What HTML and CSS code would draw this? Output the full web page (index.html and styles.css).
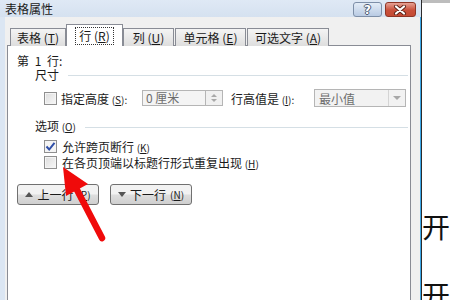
FILE: index.html
```html
<!DOCTYPE html>
<html lang="zh-CN">
<head>
  <meta charset="UTF-8" />
  <title>表格属性</title>
  <link rel="stylesheet" href="styles.css">
</head>
<body>

<div class="screen">
  <div class="dialog">
    <div class="titlebar">
      <span class="title">表格属性</span>
      <div class="caption-btns">
        <span class="cap-btn help">?</span>
        <span class="cap-btn close">
          <svg width="14" height="10" viewBox="0 0 14 10">
            <path d="M3 1.5 L11 8.5 M11 1.5 L3 8.5" stroke="#5a2218" stroke-width="4" stroke-linecap="round"/>
            <path d="M3 1.5 L11 8.5 M11 1.5 L3 8.5" stroke="#fff" stroke-width="2.2" stroke-linecap="round"/>
          </svg>
        </span>
      </div>
    </div>

    <div class="client">
      <div class="tabs">
        <span class="tab t1">表格 (<u>T</u>)</span>
        <span class="tab t2 active"><span class="focus">行 (<u>R</u>)</span></span>
        <span class="tab t3">列 (<u>U</u>)</span>
        <span class="tab t4">单元格 (<u>E</u>)</span>
        <span class="tab t5">可选文字 (<u>A</u>)</span>
      </div>

      <div class="panel">
        <div class="row-title">第 1 行:</div>

        <div class="group-head"><span>尺寸</span><i class="rule"></i></div>
        <div class="size-row">
          <span class="check"></span>
          <span class="label l1">指定高度 <small>(<u>S</u>):</small></span>
          <span class="field">0 厘米</span>
          <span class="spin"><b class="up"></b><b class="down"></b></span>
          <span class="label l2">行高值是 <small>(<u>I</u>):</small></span>
          <span class="select">最小值<span class="drop"><b></b></span></span>
        </div>

        <div class="group-head opts"><span>选项 <small>(<u>O</u>)</small></span><i class="rule"></i></div>
        <div class="opt-row">
          <span class="check on">
            <svg width="11" height="11" viewBox="0 0 11 11"><path d="M1.5 5.5 L4.2 8.5 L9.5 1.8" fill="none" stroke="#2f4fa8" stroke-width="2"/></svg>
          </span>
          <span>允许跨页断行 <small>(<u>K</u>)</small></span>
        </div>
        <div class="opt-row">
          <span class="check"></span>
          <span>在各页顶端以标题行形式重复出现 <small>(<u>H</u>)</small></span>
        </div>

        <div class="nav-btns">
          <span class="btn"><i class="tri up"></i>上一行 <small>(<u>P</u>)</small></span>
          <span class="btn"><i class="tri down"></i>下一行 <small>(<u>N</u>)</small></span>
        </div>
      </div>
    </div>
  </div>

  <div class="doc">
    <p>开</p>
    <p>开</p>
  </div>

  <!-- 红色箭头标注 -->
  <svg class="arrow" width="450" height="300" viewBox="0 0 450 300">
    <line x1="76" y1="188" x2="102" y2="238" stroke="#f00a0a" stroke-width="6.5" stroke-linecap="round"/>
    <polygon points="63,167 88,184 66,196" fill="#f00a0a"/>
  </svg>
</div>

</body>
</html>
```

FILE: styles.css
```css
body {
  margin: 0;
  font-family: "Noto Sans CJK SC", "Liberation Sans", sans-serif;
  font-size: 12px;
  color: #1a1a1a;
  background: #fff;
}
small {
  font-size: 10px;
}
.screen {
  position: relative;
  display: flex;
  width: 450px;
  height: 300px;
  overflow: hidden;
}
.dialog {
  width: 428px;
  box-sizing: border-box;
  display: flex;
  flex-direction: column;
  background: #dbe6f3;
  border-right: 1px solid #2b2b2b;
}
.titlebar {
  height: 20px;
  display: flex;
  align-items: center;
  justify-content: space-between;
  padding: 0 5px 0 5px;
  background: linear-gradient(#dfe9f5, #d5e1f0);
}
.title {
  line-height: 14px;
  margin-top: 1px;
}
.caption-btns {
  display: flex;
  gap: 3px;
  align-self: flex-start;
  margin-top: 2px;
}
.cap-btn {
  height: 15px;
  box-sizing: border-box;
  border-radius: 3px;
  display: flex;
  align-items: center;
  justify-content: center;
}
.help {
  width: 29px;
  border: 1px solid #7d8fa8;
  background: linear-gradient(#e3ecf7, #b9cbe3);
  color: #fff;
  font-family: "DejaVu Sans", sans-serif;
  font-weight: bold;
  font-size: 12px;
  line-height: 12px;
  text-shadow: 1px 0 #4a5a72, -1px 0 #4a5a72, 0 1px #4a5a72, 0 -1px #4a5a72;
}
.close {
  width: 31px;
  border: 1px solid #8e3526;
  background: linear-gradient(#e6a295, #c9503b 55%, #c44a33);
}
.client {
  flex: 1;
  margin-left: 5px;
  background: #f0f0f0;
  border-right: 1px solid #3ba6e6;
  padding: 7px 9px 0 2px;
}
.tabs {
  display: flex;
  align-items: flex-end;
  gap: 1px;
  padding-left: 3px;
  height: 22px;
  margin-bottom: -1px;
  position: relative;
}
.tab {
  height: 18px;
  box-sizing: border-box;
  border: 1px solid #898c95;
  border-bottom: none;
  background: linear-gradient(#f4f4f4, #dedede);
  display: flex;
  align-items: center;
  justify-content: center;
  line-height: 14px;
}
.tab u, small u {
  text-decoration: underline;
}
.t1 { width: 56px; }
.t2 { width: 57px; }
.t3 { width: 51px; }
.t4 { width: 71px; }
.t5 { width: 82px; }
.tab.active {
  height: 22px;
  background: #fff;
  margin: 0 -1px;
}
.focus {
  outline: 1px dotted #333;
  padding: 1px 3px;
}
.panel {
  background: #fff;
  border: 1px solid #898c95;
  border-bottom: none;
  height: 260px;
  padding: 8px 0 0 9px;
}
.row-title {
  line-height: 14px;
  word-spacing: 3px;
}
.group-head {
  display: flex;
  align-items: center;
  padding-left: 18px;
  line-height: 14px;
  margin-right: 2px;
}
.group-head .rule {
  flex: 1;
  height: 1px;
  background: #d5dfe5;
  margin: 1px 0 0 9px;
}
.opts {
  margin-top: 12px;
}
.check {
  width: 13px;
  height: 13px;
  box-sizing: border-box;
  border: 1px solid #8f8f8f;
  background: linear-gradient(135deg, #dcdcdc, #f8f8f8);
  box-shadow: inset 0 0 0 1px #f4f4f4;
  display: flex;
  align-items: center;
  justify-content: center;
  flex: none;
}
.check.on {
  background: #f4f4f4;
}
.size-row {
  display: flex;
  align-items: center;
  height: 18px;
  margin-top: 7px;
  padding-left: 27px;
}
.label {
  margin-left: 4px;
}
.l1 { width: 81px; }
.l2 { width: 83px; margin-left: 8px; }
.field {
  width: 64px;
  height: 16px;
  box-sizing: border-box;
  border: 1px solid #b5b5b5;
  background: #f4f4f4;
  color: #6d6d6d;
  padding-left: 3px;
  line-height: 14px;
}
.spin {
  width: 17px;
  height: 16px;
  box-sizing: border-box;
  border: 1px solid #b5b5b5;
  border-left: none;
  background: #f0f0f0;
  display: flex;
  flex-direction: column;
  align-items: center;
  justify-content: space-around;
  padding: 2px 0;
}
.spin b {
  width: 0;
  height: 0;
  border-left: 3px solid transparent;
  border-right: 3px solid transparent;
}
.spin .up { border-bottom: 3px solid #a8a8a8; }
.spin .down { border-top: 3px solid #a8a8a8; }
.select {
  width: 92px;
  height: 18px;
  box-sizing: border-box;
  border: 1px solid #b5b5b5;
  background: #f2f2f2;
  color: #6d6d6d;
  display: flex;
  align-items: center;
  justify-content: space-between;
  padding-left: 4px;
}
.drop {
  width: 16px;
  height: 16px;
  border-left: 1px solid #d4d4d4;
  display: flex;
  align-items: center;
  justify-content: center;
}
.drop b {
  border-left: 4px solid transparent;
  border-right: 4px solid transparent;
  border-top: 4px solid #a8a8a8;
}
.opt-row {
  display: flex;
  align-items: center;
  gap: 5px;
  height: 16px;
  padding-left: 27px;
}
.opts + .opt-row {
  margin-top: 4px;
}
.nav-btns {
  display: flex;
  gap: 11px;
  margin-top: 14px;
}
.btn {
  width: 82px;
  height: 21px;
  box-sizing: border-box;
  border: 1px solid #707070;
  border-radius: 3px;
  background: linear-gradient(#f2f2f2 45%, #dddddd 55%, #cfcfcf);
  display: flex;
  align-items: center;
  justify-content: center;
  gap: 4px;
}
.tri {
  width: 0;
  height: 0;
  border-left: 4px solid transparent;
  border-right: 4px solid transparent;
}
.tri.up { border-bottom: 5px solid #555; }
.tri.down { border-top: 5px solid #555; }
.doc {
  flex: 1;
  border-top: 3px solid #bdbdbd;
  background: #fff;
  padding-top: 189px;
}
.doc p {
  margin: 0;
  font-size: 28px;
  line-height: 68px;
  color: #111;
}
.arrow {
  position: absolute;
  left: 0;
  top: 0;
  pointer-events: none;
}
```
